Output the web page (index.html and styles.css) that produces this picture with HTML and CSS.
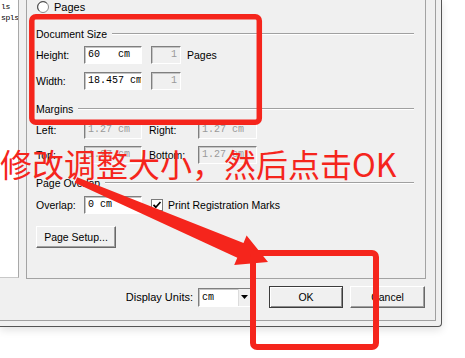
FILE: index.html
```html
<!DOCTYPE html>
<html>
  <head>
    <meta charset="utf-8" />
    <title>Print Options</title>
    <link rel="stylesheet" href="styles.css">
  </head>

  <body>
    <div class="screen">
      <div class="dialog">
        <div class="dialog-frame">
          <div class="dialog-body">
            <div class="list-panel">
              <div class="list-line">ls</div>
              <div class="list-line">spls</div>
            </div>

            <div class="group-box">
              <div class="radio-row">
                <svg class="radio" width="12" height="12" viewBox="0 0 12 12">
                  <circle cx="6" cy="6" r="5.5" fill="#fff" stroke="#8a8a8a" />
                  <path d="M2.2 9.8 A5 5 0 0 1 9.8 2.2" fill="none" stroke="#4a4a4a" />
                </svg>
                <span>Pages</span>
              </div>

              <div class="section-title">Document Size</div>
              <div class="form-row">
                <label class="field-label">Height:</label>
                <div class="text-box">60&nbsp;&nbsp;&nbsp;cm</div>
                <div class="text-box small disabled">1</div>
                <span class="unit-label">Pages</span>
              </div>
              <div class="form-row gap-8">
                <label class="field-label">Width:</label>
                <div class="text-box">18.457 cm</div>
                <div class="text-box small disabled">1</div>
              </div>

              <div class="section-title">Margins</div>
              <div class="form-row">
                <label class="field-label dim">Left:</label>
                <div class="text-box disabled">1.27 cm</div>
                <label class="field-label second">Right:</label>
                <div class="text-box wide disabled">1.27 cm</div>
              </div>
              <div class="form-row gap-7">
                <label class="field-label dim">Top:</label>
                <div class="text-box disabled">1.27 cm</div>
                <label class="field-label second">Bottom:</label>
                <div class="text-box wide disabled">1.27 cm</div>
              </div>

              <div class="section-title">Page Overlap</div>
              <div class="form-row overlap-row">
                <label class="field-label">Overlap:</label>
                <div class="text-box">0 cm</div>
                <label class="check-label">
                  <svg class="check-box" width="12" height="12" viewBox="0 0 12 12">
                    <rect x="0.5" y="0.5" width="11" height="11" fill="#fff" stroke="#7a7a7a" />
                    <path d="M2.5 5.8 L4.8 8.2 L9.5 3" fill="none" stroke="#000" stroke-width="1.7" />
                  </svg>
                  <span>Print Registration Marks</span>
                </label>
              </div>

              <button class="win-btn setup-btn">Page Setup...</button>
            </div>
          </div>

          <div class="dialog-footer">
            <span class="units-label">Display Units:</span>
            <div class="combo-box">
              <span class="combo-value">cm</span>
              <span class="combo-arrow">
                <svg width="7" height="4" viewBox="0 0 7 4"><path d="M0 0 H7 L3.5 4 Z" fill="#000" /></svg>
              </span>
            </div>
            <button class="win-btn default-btn">OK</button>
            <button class="win-btn cancel-btn">Cancel</button>
          </div>
        </div>
      </div>

      <!-- red annotation drawn over the screenshot -->
      <div class="note-text">修改调整大小，然后点击OK</div>
      <svg class="note-marks" width="465" height="358" viewBox="0 0 465 358">
        <rect x="31.8" y="16.8" width="227.5" height="105.5" rx="4" fill="none" stroke="#f5251c" stroke-width="5.5" />
        <polygon fill="#f5251c"
          points="77.2,177.2 243.5,242.9 246.6,235.6 268,262 234.2,265 237.3,257.7 74.8,182.8" />
        <rect x="253" y="253" width="123" height="94" rx="4" fill="none" stroke="#f5251c" stroke-width="6" />
      </svg>
    </div>
  </body>
</html>
```

FILE: styles.css
```css
body {
  margin: 0;
  background-color: #ffffff;
  font-family: "Liberation Sans", Arial, sans-serif;
  font-size: 10.5px;
  color: #000000;
}

.screen {
  position: relative;
  width: 465px;
  height: 358px;
  overflow: hidden;
}

.dialog {
  width: 442px;
  height: 327px;
  box-sizing: border-box;
  padding: 0 5px 5px 0;
  background-color: #f0f0f0;
  border-right: 1px solid #555555;
  border-bottom: 1px solid #555555;
  border-bottom-right-radius: 4px;
  box-shadow: 0 3px 8px rgba(0, 0, 0, 0.12);
}

.dialog-frame {
  width: 436px;
  height: 321px;
  box-sizing: border-box;
  border-right: 1px solid #a0a0a0;
  border-bottom: 1px solid #a0a0a0;
}

.dialog-body {
  display: flex;
  gap: 7px;
  height: 279px;
}

.list-panel {
  width: 19px;
  height: 278px;
  box-sizing: border-box;
  background-color: #ffffff;
  border-right: 1px solid #a8a8a8;
  border-bottom: 1px solid #c8c8c8;
  overflow: hidden;
  font-family: "Liberation Mono", monospace;
  font-size: 8px;
  letter-spacing: -0.4px;
  white-space: nowrap;
}

.list-line {
  height: 11px;
  line-height: 11px;
  padding-left: 1px;
}

.list-line:first-child {
  margin-top: 1px;
}

.group-box {
  width: 400px;
  height: 279px;
  box-sizing: border-box;
  padding: 0 11px 30px 9px;
  border-left: 1px solid #a3a3a3;
  border-right: 1px solid #a3a3a3;
  border-bottom: 1px solid #a3a3a3;
  display: flex;
  flex-direction: column;
}

.radio-row {
  display: flex;
  align-items: center;
  height: 14px;
  gap: 5px;
  padding-left: 1px;
  font-size: 11px;
}

.section-title {
  display: flex;
  align-items: center;
  gap: 5px;
  height: 14px;
  margin-top: 12px;
  white-space: nowrap;
}

.radio-row + .section-title {
  margin-top: 13px;
}

.section-title::after {
  content: "";
  flex: 1;
  border-top: 1px solid #a0a0a0;
  border-bottom: 1px solid #ffffff;
}

.form-row {
  display: flex;
  align-items: center;
  height: 18px;
  margin-top: 5px;
}

.form-row.gap-8 {
  margin-top: 8px;
}

.form-row.gap-7 {
  margin-top: 7px;
}

.form-row.overlap-row {
  margin-top: 6px;
}

.field-label {
  width: 48px;
  flex-shrink: 0;
}

.field-label.second {
  width: 49px;
  margin-left: 7px;
}

.text-box {
  width: 58px;
  height: 18px;
  box-sizing: border-box;
  padding: 0 3px;
  background-color: #ffffff;
  border: 1px solid;
  border-color: #7f7f7f #ffffff #ffffff #7f7f7f;
  box-shadow: inset 1px 1px 0 #c4c4c4;
  font-family: "Liberation Mono", monospace;
  font-size: 10px;
  line-height: 16px;
  white-space: nowrap;
  overflow: hidden;
}

.text-box.wide {
  width: 59px;
}

.text-box.small {
  width: 30px;
  margin-left: 9px;
  text-align: right;
}

.text-box.disabled {
  background-color: #f0f0f0;
  color: #9a9a9a;
}

.unit-label {
  margin-left: 6px;
}

.check-label {
  display: flex;
  align-items: center;
  gap: 5px;
  margin-left: 9px;
}

.win-btn {
  box-sizing: border-box;
  height: 22px;
  padding: 0;
  background-color: #f0f0f0;
  border: 1px solid;
  border-color: #ffffff #696969 #696969 #ffffff;
  box-shadow: inset -1px -1px 0 #a0a0a0;
  font-family: "Liberation Sans", Arial, sans-serif;
  font-size: 10.5px;
  color: #000000;
}

.setup-btn {
  width: 80px;
  margin-top: 12px;
  text-align: center;
}

.dialog-footer {
  display: flex;
  align-items: center;
  justify-content: flex-end;
  height: 22px;
  margin-top: 7px;
  padding-right: 10px;
}

.units-label {
  margin-right: 5px;
  font-size: 11px;
}

.combo-box {
  display: flex;
  width: 53px;
  height: 19px;
  box-sizing: border-box;
  background-color: #ffffff;
  border: 1px solid;
  border-color: #7f7f7f #ffffff #ffffff #7f7f7f;
  box-shadow: inset 1px 1px 0 #c4c4c4;
}

.combo-value {
  flex: 1;
  padding-left: 3px;
  font-family: "Liberation Mono", monospace;
  font-size: 10px;
  line-height: 17px;
}

.combo-arrow {
  display: flex;
  align-items: center;
  justify-content: center;
  width: 11px;
  background-color: #f0f0f0;
  border-left: 1px solid #dcdcdc;
}

.default-btn {
  width: 74px;
  margin-left: 18px;
  border: 1px solid #3c3c3c;
  box-shadow: inset 1px 1px 0 #ffffff, inset -1px -1px 0 #8c8c8c;
}

.cancel-btn {
  width: 75px;
  margin-left: 7px;
}

.note-text {
  position: absolute;
  left: 0;
  top: 147px;
  font-family: "Noto Sans CJK SC", sans-serif;
  font-size: 32px;
  line-height: 32px;
  color: #f5251c;
  white-space: nowrap;
}

.note-marks {
  position: absolute;
  left: 0;
  top: 0;
  pointer-events: none;
}
```
